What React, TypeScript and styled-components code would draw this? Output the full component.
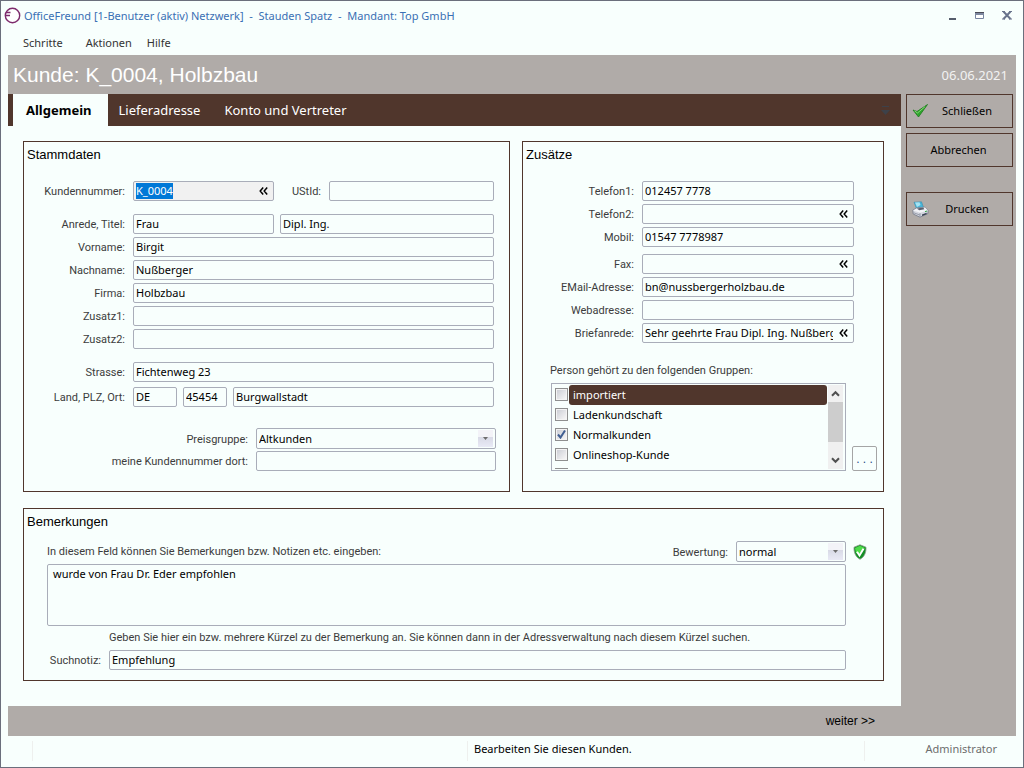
import React, { useEffect, useRef, useState } from "react";
import styled, { createGlobalStyle, css } from "styled-components";

const color = {
  paper: "#f8fffd",
  taupe: "#b0aba8",
  brown: "#50362c",
  fieldBorder: "#a9adb9",
  frame: "#6b6f7c",
  label: "#3c3c3c",
};

const font = {
  ui: '"Noto Sans", "Open Sans", sans-serif',
  label: 'Roboto, "Liberation Sans", sans-serif',
  heading: '"Liberation Sans", Arial, sans-serif',
};

const GlobalStyle = createGlobalStyle`
  *, *::before, *::after { box-sizing: border-box; }
  body { margin: 0; background: ${color.paper}; }
  button, input, select, textarea { font: inherit; color: inherit; margin: 0; }
`;

const Window = styled.div`
  display: flex;
  flex-direction: column;
  min-height: 100vh;
  padding: 0 7px;
  border: 1px solid ${color.frame};
  background: ${color.paper};
  font: 11px/16px ${font.ui};
  color: #000;
`;

const TitleBar = styled.header`
  display: flex;
  align-items: center;
  height: 29px;
  margin: 0 -4px;
`;

const WindowTitle = styled.h1`
  flex: 1;
  margin: 0 0 0 3px;
  font-size: 11px;
  font-weight: 400;
  color: #3a6fb4;
  white-space: pre;
`;

const CaptionButton = styled.button`
  display: flex;
  align-items: center;
  justify-content: center;
  width: 27px;
  height: 20px;
  padding: 0;
  border: 0;
  background: none;
`;

const MenuBar = styled.nav`
  display: flex;
  gap: 15px;
  height: 25px;
  align-items: center;
  padding-left: 15px;
`;

const MenuItem = styled.button<{ $wide?: boolean }>`
  padding: 0;
  margin-right: ${(p) => (p.$wide ? "8px" : "0")};
  border: 0;
  background: none;
  color: #333;
`;

const Frame = styled.div`
  flex: 1;
  display: flex;
  flex-direction: column;
  background: ${color.taupe};
`;

const Banner = styled.div`
  display: flex;
  align-items: center;
  justify-content: space-between;
  height: 39px;
  padding: 0 8px 0 5px;
  color: #fff;
`;

const BannerTitle = styled.h2`
  margin: 0;
  font: 400 21px/26px ${font.heading};
`;

const BannerDate = styled.time`
  font-size: 13px;
  color: #f2f2f2;
`;

const Body = styled.div`
  flex: 1;
  display: flex;
`;

const Main = styled.main`
  flex: 1;
  min-width: 0;
  background: ${color.paper};
`;

const TabBar = styled.div`
  display: flex;
  align-items: stretch;
  height: 32px;
  padding-left: 5px;
  background: ${color.brown};
  font-size: 13px;
  line-height: 18px;
`;

const Tab = styled.button<{ $active?: boolean }>`
  padding: 0 13px 0 11px;
  border: 0;
  background: none;
  color: #fff;
  ${(p) =>
    p.$active &&
    css`
      padding: 0 16px 0 13px;
      background: ${color.paper};
      color: #000;
      font-weight: 700;
    `}
`;

const TabOverflow = styled.button`
  display: flex;
  align-items: center;
  margin-left: auto;
  padding: 0 11px;
  border: 0;
  background: none;
`;

const Panels = styled.div`
  display: grid;
  grid-template-columns: 487fr 362fr;
  gap: 16px 12px;
  padding: 15px 17px 25px 15px;
`;

const Panel = styled.section<{ $full?: boolean }>`
  min-width: 0;
  border: 1px solid ${color.brown};
  grid-column: ${(p) => (p.$full ? "1 / -1" : "auto")};
`;

const PanelTitle = styled.h3`
  margin: 5px 3px 0;
  font: 400 13px/16px ${font.heading};
`;

const Form = styled.div<{ $right: number; $top: number; $bottom: number; $gap?: number }>`
  display: flex;
  flex-direction: column;
  gap: ${(p) => p.$gap ?? 3}px;
  padding: ${(p) => `${p.$top}px ${p.$right}px ${p.$bottom}px 0`};
`;

const Row = styled.div<{ $gapBefore?: number }>`
  display: flex;
  align-items: center;
  margin-top: ${(p) => p.$gapBefore ?? 0}px;
`;

const Label = styled.label<{ $width?: number }>`
  flex: none;
  width: ${(p) => (p.$width ? `${p.$width}px` : "auto")};
  padding: 2px 8px 0 0;
  text-align: right;
  font: 400 11px/16px ${font.label};
  color: ${color.label};
  white-space: nowrap;
`;

const Note = styled.p`
  margin: 0;
  font: 400 11px/16px ${font.label};
  color: ${color.label};
`;

const Box = styled.div<{ $width?: number; $shaded?: boolean }>`
  display: flex;
  align-items: center;
  flex: ${(p) => (p.$width ? `0 0 ${p.$width}px` : "1 1 0")};
  min-width: 0;
  height: 20px;
  border: 1px solid ${color.fieldBorder};
  border-radius: 2px;
  background: ${(p) => (p.$shaded ? "#f1f1f1" : color.paper)};
`;

const TextInput = styled.input`
  flex: 1;
  min-width: 0;
  height: 16px;
  margin: 0 0 0 2px;
  padding: 0;
  border: 0;
  outline: 0;
  background: none;
  caret-color: #e8832a;

  &::selection {
    background: #0078d7;
    color: #fff;
  }
`;

const LookupButton = styled.button`
  display: flex;
  align-items: center;
  justify-content: center;
  width: 20px;
  height: 18px;
  padding: 0;
  border: 0;
  background: none;
`;

const Gap = styled.span`
  flex: 0 0 6px;
`;

const SelectBox = styled.div<{ $width?: number }>`
  position: relative;
  flex: ${(p) => (p.$width ? `0 0 ${p.$width}px` : "1 1 0")};
  height: 21px;
`;

const SelectInput = styled.select`
  appearance: none;
  width: 100%;
  height: 21px;
  padding: 0 20px 0 2px;
  border: 1px solid ${color.fieldBorder};
  border-radius: 2px;
  background: ${color.paper};
  outline: 0;
`;

const SelectArrow = styled.span`
  position: absolute;
  top: 2px;
  right: 3px;
  display: flex;
  align-items: center;
  justify-content: center;
  width: 15px;
  height: 17px;
  background: linear-gradient(#f3f3f8 0 40%, #d8dae6 41%, #e9eaf6 100%);
  pointer-events: none;
`;

const GroupArea = styled.div`
  padding: 20px 6px 20px 27px;
`;

const GroupRow = styled.div`
  display: flex;
  align-items: flex-end;
  gap: 6px;
  margin-top: 4px;
  padding-left: 1px;
`;

const ListBox = styled.div`
  flex: 1;
  display: flex;
  height: 88px;
  padding: 1px 2px 1px 3px;
  border: 1px solid ${color.fieldBorder};
`;

const ListItems = styled.ul`
  flex: 1;
  height: 84px;
  margin: 0;
  padding: 0;
  overflow: hidden;
  list-style: none;
`;

const ListItem = styled.li`
  display: flex;
  height: 20px;
`;

const Check = styled.input`
  appearance: none;
  flex: none;
  width: 13px;
  height: 13px;
  margin: 3px 0 0;
  border: 1px solid #8e8f8f;
  background: linear-gradient(135deg, #cdcfd6, #f6f6f6) content-box;
  padding: 1px;
  outline: 1px solid #f4f4f4;
  outline-offset: -2px;

  &:checked {
    background:
      url("data:image/svg+xml,%3Csvg xmlns='http://www.w3.org/2000/svg' viewBox='0 0 11 11'%3E%3Cpath d='M2 5.5l2.5 3L9 1.5' fill='none' stroke='%23405f92' stroke-width='2'/%3E%3C/svg%3E"),
      linear-gradient(135deg, #cdcfd6, #f6f6f6) content-box;
  }
`;

const CheckLabel = styled.label<{ $selected?: boolean }>`
  flex: 1;
  height: 20px;
  margin: 0 1px;
  padding: 2px 4px;
  border-radius: 3px;
  background: ${(p) => (p.$selected ? color.brown : "transparent")};
  color: ${(p) => (p.$selected ? "#fff" : "#000")};
`;

const ScrollBar = styled.div`
  display: flex;
  flex-direction: column;
  width: 15px;
  height: 84px;
  background: #f0f0f0;
`;

const ScrollButton = styled.button`
  display: flex;
  align-items: center;
  justify-content: center;
  width: 15px;
  height: 17px;
  padding: 0;
  border: 0;
  background: none;
`;

const ScrollTrack = styled.div`
  flex: 1;
`;

const ScrollThumb = styled.div`
  height: 40px;
  background: #cdcdcd;
`;

const MoreButton = styled.button`
  width: 25px;
  height: 25px;
  padding: 0;
  border: 1px solid #a5a5a5;
  border-radius: 2px;
  background: ${color.paper};
  color: #2a4a86;
  font: 12px/22px ${font.heading};
  white-space: pre;
`;

const Remarks = styled.div`
  display: flex;
  flex-direction: column;
  padding: 11px 37px 10px 23px;
`;

const RemarksHead = styled.div`
  display: flex;
  align-items: center;
  height: 21px;
  margin-right: -22px;
`;

const RemarksNote = styled(Note)`
  flex: 1;
`;

const Shield = styled.span`
  display: flex;
  width: 22px;
  padding-left: 7px;
`;

const TextArea = styled.textarea`
  display: block;
  width: 100%;
  height: 62px;
  margin-top: 2px;
  padding: 1px 5px;
  border: 1px solid ${color.fieldBorder};
  border-radius: 2px;
  background: ${color.paper};
  outline: 0;
  resize: none;
`;

const SearchNote = styled(Note)`
  margin: 4px 0;
  padding-left: 62px;
`;

const SideBar = styled.aside`
  display: flex;
  flex-direction: column;
  gap: 5px;
  width: 115px;
  padding: 0 3px 0 5px;
`;

const SideButton = styled.button<{ $apart?: boolean }>`
  display: flex;
  align-items: center;
  height: 34px;
  margin-top: ${(p) => (p.$apart ? "20px" : "0")};
  padding: 0 7px 0 5px;
  border: 1px solid ${color.brown};
  background: none;
  color: #000;
`;

const SideText = styled.span`
  flex: 1;
  text-align: center;
`;

const Footer = styled.footer`
  display: flex;
  align-items: center;
  justify-content: flex-end;
  height: 30px;
  padding-right: 141px;
`;

const NextButton = styled.button`
  padding: 0;
  border: 0;
  background: none;
  font: 12px/16px ${font.heading};
`;

const StatusBar = styled.div`
  display: grid;
  grid-template-columns: 24px 435fr 397fr 152px;
  height: 31px;
  padding: 5px 0 6px;
`;

const StatusCell = styled.span<{ $muted?: boolean }>`
  padding: 0 0 0 6px;
  border-left: 1px solid #eef0ee;
  color: ${(p) => (p.$muted ? "#6d6d6d" : "#000")};
  line-height: 16px;
`;

const StatusUser = styled(StatusCell)`
  padding: 0 19px 0 0;
  text-align: right;
`;

const Logo = () => (
  <svg width="17" height="17" viewBox="0 0 17 17" aria-hidden="true">
    <circle cx="8.5" cy="8.5" r="7.2" fill="#fff" stroke="#7d2a6c" strokeWidth="1.4" />
    <path d="M1.5 8.5H6M2 5.500h4.500" fill="none" stroke="#7d2a6c" strokeWidth="1.3" />
  </svg>
);

const MinimizeIcon = () => (
  <svg width="9" height="10" viewBox="0 0 9 10" aria-hidden="true">
    <path d="M1 7h7v2H1z" fill="#555c6b" />
  </svg>
);

const MaximizeIcon = () => (
  <svg width="9" height="8" viewBox="0 0 9 8" aria-hidden="true">
    <path d="M.5.5h8v6h-8z" fill="#fff" stroke="#7784a0" />
    <path d="M0 0h9v1H0z" fill="#4b4b57" />
    <path d="M0 1h9v2H0z" fill="#7d88a0" />
  </svg>
);

const CloseIcon = () => (
  <svg width="10" height="9" viewBox="0 0 10 9" aria-hidden="true">
    <path d="M1.5.5l7 7.5M8.5.5l-7 7.5" stroke="#68738c" strokeWidth="2" />
    <path d="M0 .5h3M7 .5h3M0 8h3M7 8h3" stroke="#68738c" />
  </svg>
);

const OverflowIcon = () => (
  <svg width="9" height="9" viewBox="0 0 9 9" aria-hidden="true">
    <path d="M1 0h7v1H1zM0 4h9L4.5 9z" fill="#3d4149" />
  </svg>
);

const LookupIcon = () => (
  <svg width="9" height="8" viewBox="0 0 9 8" aria-hidden="true">
    <path d="M4.2.6L1.2 4l3 3.4M8.2.6L5.2 4l3 3.4" fill="none" stroke="#000" strokeWidth="1.5" />
  </svg>
);

const ArrowIcon = () => (
  <svg width="5" height="3" viewBox="0 0 5 3" aria-hidden="true">
    <path d="M0 0h5L2.5 3z" fill="#6c6c6c" />
  </svg>
);

const ChevronIcon = ({ down }: { down?: boolean }) => (
  <svg width="9" height="7" viewBox="0 0 9 7" aria-hidden="true">
    <path d={down ? "M1 1.2l3.5 3.6L8 1.2" : "M1 5.8l3.5-3.6L8 5.8"} fill="none" stroke="#505050" strokeWidth="2" />
  </svg>
);

const CheckIcon = () => (
  <svg width="17" height="16" viewBox="0 0 17 16" aria-hidden="true">
    <path d="M1 7l4 1.5L15.5 1.5 6.5 14z" fill="#2fa52c" stroke="#1c7a1c" strokeWidth=".8" strokeLinejoin="round" />
    <path d="M2.5 7.8L5.5 10 13 3.6" fill="none" stroke="#8bdc7c" strokeWidth=".9" />
  </svg>
);

const PrinterIcon = () => (
  <svg width="17" height="17" viewBox="0 0 17 17" aria-hidden="true">
    <path d="M2 1.2L9.5.8l2.3 6.4-7 1.2z" fill="#49b5d8" stroke="#3287a6" strokeWidth=".5" />
    <path d="M3 1.6l4.5-.3 1 2.6-3.5 2z" fill="#a5e3f3" />
    <path d="M.8 9.2L5 6.8l8-.6 3 3.3v3L8 16.2 1.2 13z" fill="#d3d6df" stroke="#747a89" strokeWidth=".8" strokeLinejoin="round" />
    <path d="M1 9.4l7 2.4 7.8-2.2L13 6.6 5 7.2z" fill="#f2f3f7" />
    <path d="M4.8 7.6l6.4-1 1.2 1.6-5.2 1z" fill="#5a6070" />
    <path d="M8 12.2v3.4M1.8 11.8l6 2.2" stroke="#888e9d" strokeWidth=".8" />
    <path d="M10 13.4l4.6-1.6v1.4L10 15z" fill="#394153" />
    <path d="M13 10.6l2-.6" stroke="#35a545" strokeWidth="1" />
  </svg>
);

const ShieldIcon = () => (
  <svg width="14" height="16" viewBox="0 0 14 16" aria-hidden="true">
    <path d="M1 3.2L7 .8l6 2.400C13.300 8 11.500 13 7 15.300 2.500 13 .7 8 1 3.200z" fill="#138f25" stroke="#8a9a8a" strokeWidth=".8" />
    <path d="M2 4l5-2.200L12 4 9.500 7 6 9.500 3 9z" fill="#4fdc4a" />
    <path d="M4 7.800l2.500 3.700 4-6.700" fill="none" stroke="#fff" strokeWidth="2" />
  </svg>
);

type FieldProps = {
  id: string;
  value?: string;
  name?: string;
  width?: number;
  lookup?: boolean;
  selected?: boolean;
};

function Field({ id, value = "", name, width, lookup, selected }: FieldProps) {
  const ref = useRef<HTMLInputElement>(null);
  useEffect(() => {
    if (selected && ref.current) {
      ref.current.focus();
      ref.current.select();
    }
  }, [selected]);
  return (
    <Box $width={width} $shaded={selected}>
      <TextInput id={id} ref={ref} defaultValue={value} aria-label={name} />
      {lookup && (
        <LookupButton type="button" aria-label="Auswählen">
          <LookupIcon />
        </LookupButton>
      )}
    </Box>
  );
}

type LineProps = FieldProps & { label: string; labelWidth: number; gapBefore?: number };

function Line({ label, labelWidth, gapBefore, ...field }: LineProps) {
  return (
    <Row $gapBefore={gapBefore}>
      <Label htmlFor={field.id} $width={labelWidth}>{label}</Label>
      <Field {...field} />
    </Row>
  );
}

function Dropdown({ id, value, width }: { id: string; value: string; width?: number }) {
  return (
    <SelectBox $width={width}>
      <SelectInput id={id} defaultValue={value}>
        <option>{value}</option>
      </SelectInput>
      <SelectArrow><ArrowIcon /></SelectArrow>
    </SelectBox>
  );
}

const L = 109;
const R = 119;

function MasterData() {
  return (
    <Panel>
      <PanelTitle>Stammdaten</PanelTitle>
      <Form $top={18} $right={15} $bottom={0}>
        <Row>
          <Label htmlFor="nr" $width={L}>Kundennummer:</Label>
          <Field id="nr" value="K_0004" width={141} lookup selected />
          <Label htmlFor="ust" $width={55}>UStId:</Label>
          <Field id="ust" />
        </Row>
        <Row $gapBefore={10}>
          <Label htmlFor="anrede" $width={L}>Anrede, Titel:</Label>
          <Field id="anrede" value="Frau" width={141} />
          <Gap />
          <Field id="titel" name="Titel" value="Dipl. Ing." />
        </Row>
        <Line id="vorname" label="Vorname:" labelWidth={L} value="Birgit" />
        <Line id="nachname" label="Nachname:" labelWidth={L} value="Nußberger" />
        <Line id="firma" label="Firma:" labelWidth={L} value="Holbzbau" />
        <Line id="zusatz1" label="Zusatz1:" labelWidth={L} />
        <Line id="zusatz2" label="Zusatz2:" labelWidth={L} />
        <Line id="strasse" label="Strasse:" labelWidth={L} value="Fichtenweg 23" gapBefore={10} />
        <Row $gapBefore={2}>
          <Label htmlFor="land" $width={L}>Land, PLZ, Ort:</Label>
          <Field id="land" value="DE" width={44} />
          <Gap />
          <Field id="plz" name="PLZ" value="45454" width={44} />
          <Gap />
          <Field id="ort" name="Ort" value="Burgwallstadt" />
        </Row>
      </Form>
      <Form $top={21} $right={13} $bottom={20} $gap={2}>
        <Row>
          <Label htmlFor="preis" $width={232}>Preisgruppe:</Label>
          <Dropdown id="preis" value="Altkunden" />
        </Row>
        <Line id="dort" label="meine Kundennummer dort:" labelWidth={232} />
      </Form>
    </Panel>
  );
}

const groups = [
  { name: "importiert", selected: true },
  { name: "Ladenkundschaft" },
  { name: "Normalkunden", checked: true },
  { name: "Onlineshop-Kunde" },
  { name: "" },
];

function Extras() {
  return (
    <Panel>
      <PanelTitle>Zusätze</PanelTitle>
      <Form $top={18} $right={29} $bottom={0}>
        <Line id="tel1" label="Telefon1:" labelWidth={R} value="012457 7778" />
        <Line id="tel2" label="Telefon2:" labelWidth={R} lookup />
        <Line id="mobil" label="Mobil:" labelWidth={R} value="01547 7778987" />
        <Line id="fax" label="Fax:" labelWidth={R} lookup gapBefore={4} />
        <Line id="email" label="EMail-Adresse:" labelWidth={R} value="bn@nussbergerholzbau.de" />
        <Line id="web" label="Webadresse:" labelWidth={R} />
        <Line id="brief" label="Briefanrede:" labelWidth={R} value="Sehr geehrte Frau Dipl. Ing. Nußberger" lookup />
      </Form>
      <GroupArea>
        <Note>Person gehört zu den folgenden Gruppen:</Note>
        <GroupRow>
          <ListBox>
            <ListItems>
              {groups.map((g, i) => (
                <ListItem key={i}>
                  <Check type="checkbox" id={`g${i}`} defaultChecked={g.checked} />
                  <CheckLabel htmlFor={`g${i}`} $selected={g.selected}>{g.name}</CheckLabel>
                </ListItem>
              ))}
            </ListItems>
            <ScrollBar>
              <ScrollButton type="button" aria-label="Nach oben"><ChevronIcon /></ScrollButton>
              <ScrollTrack><ScrollThumb /></ScrollTrack>
              <ScrollButton type="button" aria-label="Nach unten"><ChevronIcon down /></ScrollButton>
            </ScrollBar>
          </ListBox>
          <MoreButton type="button">. . .</MoreButton>
        </GroupRow>
      </GroupArea>
    </Panel>
  );
}

function RemarksPanel() {
  return (
    <Panel $full>
      <PanelTitle>Bemerkungen</PanelTitle>
      <Remarks>
        <RemarksHead>
          <RemarksNote as="label" htmlFor="bem">
            In diesem Feld können Sie Bemerkungen bzw. Notizen etc. eingeben:
          </RemarksNote>
          <Label htmlFor="wert">Bewertung:</Label>
          <Dropdown id="wert" value="normal" width={110} />
          <Shield><ShieldIcon /></Shield>
        </RemarksHead>
        <TextArea id="bem" defaultValue="wurde von Frau Dr. Eder empfohlen" />
        <SearchNote>
          Geben Sie hier ein bzw. mehrere Kürzel zu der Bemerkung an. Sie können dann in der Adressverwaltung nach diesem Kürzel suchen.
        </SearchNote>
        <Line id="such" label="Suchnotiz:" labelWidth={62} value="Empfehlung" />
      </Remarks>
    </Panel>
  );
}

const tabs = ["Allgemein", "Lieferadresse", "Konto und Vertreter"];

export default function App() {
  const [active, setActive] = useState(0);
  return (
    <>
      <GlobalStyle />
      <Window>
        <TitleBar>
          <Logo />
          <WindowTitle>{"OfficeFreund [1-Benutzer (aktiv) Netzwerk]  -  Stauden Spatz  -  Mandant: Top GmbH"}</WindowTitle>
          <CaptionButton type="button" aria-label="Minimieren"><MinimizeIcon /></CaptionButton>
          <CaptionButton type="button" aria-label="Maximieren"><MaximizeIcon /></CaptionButton>
          <CaptionButton type="button" aria-label="Fenster schließen"><CloseIcon /></CaptionButton>
        </TitleBar>
        <MenuBar>
          <MenuItem type="button" $wide>Schritte</MenuItem>
          <MenuItem type="button">Aktionen</MenuItem>
          <MenuItem type="button">Hilfe</MenuItem>
        </MenuBar>
        <Frame>
          <Banner>
            <BannerTitle>Kunde: K_0004, Holbzbau</BannerTitle>
            <BannerDate>06.06.2021</BannerDate>
          </Banner>
          <Body>
            <Main>
              <TabBar role="tablist">
                {tabs.map((t, i) => (
                  <Tab key={t} type="button" role="tab" aria-selected={i === active} $active={i === active} onClick={() => setActive(i)}>
                    {t}
                  </Tab>
                ))}
                <TabOverflow type="button" aria-label="Weitere Register"><OverflowIcon /></TabOverflow>
              </TabBar>
              <Panels>
                <MasterData />
                <Extras />
                <RemarksPanel />
              </Panels>
            </Main>
            <SideBar>
              <SideButton type="button"><CheckIcon /><SideText>Schließen</SideText></SideButton>
              <SideButton type="button"><SideText>Abbrechen</SideText></SideButton>
              <SideButton type="button" $apart><PrinterIcon /><SideText>Drucken</SideText></SideButton>
            </SideBar>
          </Body>
          <Footer>
            <NextButton type="button">weiter &gt;&gt;</NextButton>
          </Footer>
        </Frame>
        <StatusBar>
          <span />
          <StatusCell />
          <StatusCell>Bearbeiten Sie diesen Kunden.</StatusCell>
          <StatusUser $muted>Administrator</StatusUser>
        </StatusBar>
      </Window>
    </>
  );
}
